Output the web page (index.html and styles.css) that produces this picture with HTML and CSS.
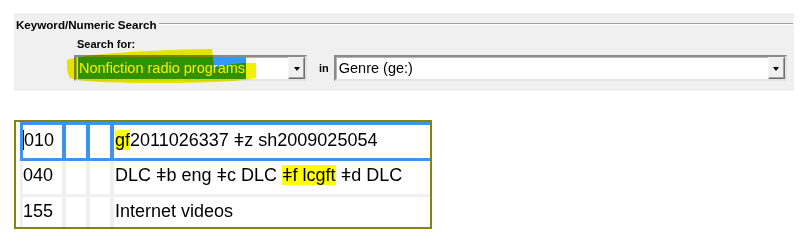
FILE: index.html
```html
<!DOCTYPE html>
<html lang="en">
<head>
  <meta charset="UTF-8">
  <title>Keyword/Numeric Search</title>
  <link rel="stylesheet" href="styles.css">
</head>
<body>
  <div class="search">
    <div class="group-title">
      <span>Keyword/Numeric Search</span>
      <span class="rule"></span>
    </div>
    <div class="search-for">Search for:</div>
    <div class="combo-row">
      <div class="combo combo-term">
        <span class="value"><span class="sel">Nonfiction radio programs</span></span>
        <span class="drop"><span class="arrow"></span></span>
      </div>
      <span class="in">in</span>
      <div class="combo combo-index">
        <span class="value">Genre (ge:)</span>
        <span class="drop"><span class="arrow"></span></span>
      </div>
    </div>
    <svg class="marker" width="200" height="40" viewBox="0 0 200 40">
      <path d="M0,11 C14,6 70,1 145,0 L147,18 C165,15 178,13 189,14 L189,29 C170,33 130,34 85,34 C45,34 15,33 3,29 C0,24 -1,16 0,11 Z" fill="#f2f200"/>
    </svg>
  </div>

  <div class="marc">
    <div class="field current">
      <div class="cell tag"><span class="caret"></span>010</div>
      <div class="cell"></div>
      <div class="cell"></div>
      <div class="cell data"><span class="hl">gf</span>2011026337 ǂz sh2009025054</div>
    </div>
    <div class="field">
      <div class="cell tag">040</div>
      <div class="cell"></div>
      <div class="cell"></div>
      <div class="cell data">DLC ǂb eng ǂc DLC <span class="hl">ǂf lcgft</span> ǂd DLC</div>
    </div>
    <div class="field last">
      <div class="cell tag">155</div>
      <div class="cell"></div>
      <div class="cell"></div>
      <div class="cell data">Internet videos</div>
    </div>
  </div>
</body>
</html>
```

FILE: styles.css
```css
body {
  margin: 0;
  font-family: "Liberation Sans", Arial, sans-serif;
  background: #fff;
  color: #000;
}

/* search group box */
.search {
  position: relative;
  margin: 13px 0 0 14px;
  width: 780px;
  height: 78px;
  background: #f0f0f0;
}
.group-title {
  display: flex;
  align-items: center;
  height: 22px;
  padding-left: 2px;
  font-size: 11.6px;
  font-weight: bold;
}
.rule {
  flex: 1;
  margin: 0 1px 0 3px;
  border-top: 1px solid #a0a0a0;
  border-bottom: 1px solid #fff;
}
.search-for {
  margin-top: 2px;
  padding-left: 63px;
  height: 14px;
  line-height: 14px;
  font-size: 11px;
  font-weight: bold;
}
.combo-row {
  display: flex;
  align-items: flex-start;
  margin-top: 4px;
  padding-left: 60px;
}
.combo {
  display: flex;
  box-sizing: border-box;
  height: 26px;
  background: #fff;
  border: 2px solid;
  border-color: #8a8a8a #e3e3e3 #e3e3e3 #8a8a8a;
  box-shadow: inset 1px 1px 0 #b5b5b5;
}
.combo-term {
  width: 233px;
}
.combo-index {
  width: 453px;
}
.combo .value {
  flex: 1;
  display: flex;
  align-items: center;
  padding-left: 2px;
  font-size: 14.5px;
}
.combo-index .value {
  padding-left: 3px;
}
.sel {
  line-height: 22px;
  padding: 0 1px;
  background: #3399ff;
  color: #fff;
}
.drop {
  display: flex;
  align-items: center;
  justify-content: center;
  box-sizing: border-box;
  width: 17px;
  background: #f0f0f0;
  border: 1px solid;
  border-color: #f4f4f4 #6e6e6e #6e6e6e #f4f4f4;
  box-shadow: inset -1px -1px 0 #a0a0a0;
}
.arrow {
  width: 0;
  height: 0;
  border-top: 4px solid #000;
  border-left: 3.5px solid transparent;
  border-right: 3.5px solid transparent;
  margin-top: 1px;
}
.in {
  margin: 7px 5px 0 12px;
  font-size: 11px;
  font-weight: bold;
}
/* yellow highlighter stroke drawn over the selected term */
.marker {
  position: absolute;
  left: 53px;
  top: 36px;
  mix-blend-mode: multiply;
  pointer-events: none;
}

/* marc record grid */
.marc {
  margin: 29px 0 0 14px;
  width: 418px;
  height: 109px;
  box-sizing: border-box;
  border: 2px solid #84840e;
  padding-left: 4px;
  overflow: hidden;
  font-size: 18px;
}
.field {
  display: grid;
  grid-template-columns: 39px 20px 20px 1fr;
  column-gap: 4px;
  height: 33px;
  background: #f0f0f0;
  border-left: 3px solid #f0f0f0;
  border-bottom: 3px solid #f0f0f0;
}
.field.current {
  height: 33px;
  background: #3d94f0;
  border: 3px solid #3d94f0;
  border-right: none;
}
.field.last {
  border-bottom: none;
  height: 32px;
}
.cell {
  background: #fff;
  line-height: 20px;
  padding: 4px 0 0 1px;
  white-space: nowrap;
}
.field.current .cell {
  padding-top: 5px;
}
.tag {
  padding-left: 0;
}
.caret {
  display: inline-block;
  width: 1px;
  height: 20px;
  background: #000;
  vertical-align: top;
}
.hl {
  background: #ffff00;
}
```
